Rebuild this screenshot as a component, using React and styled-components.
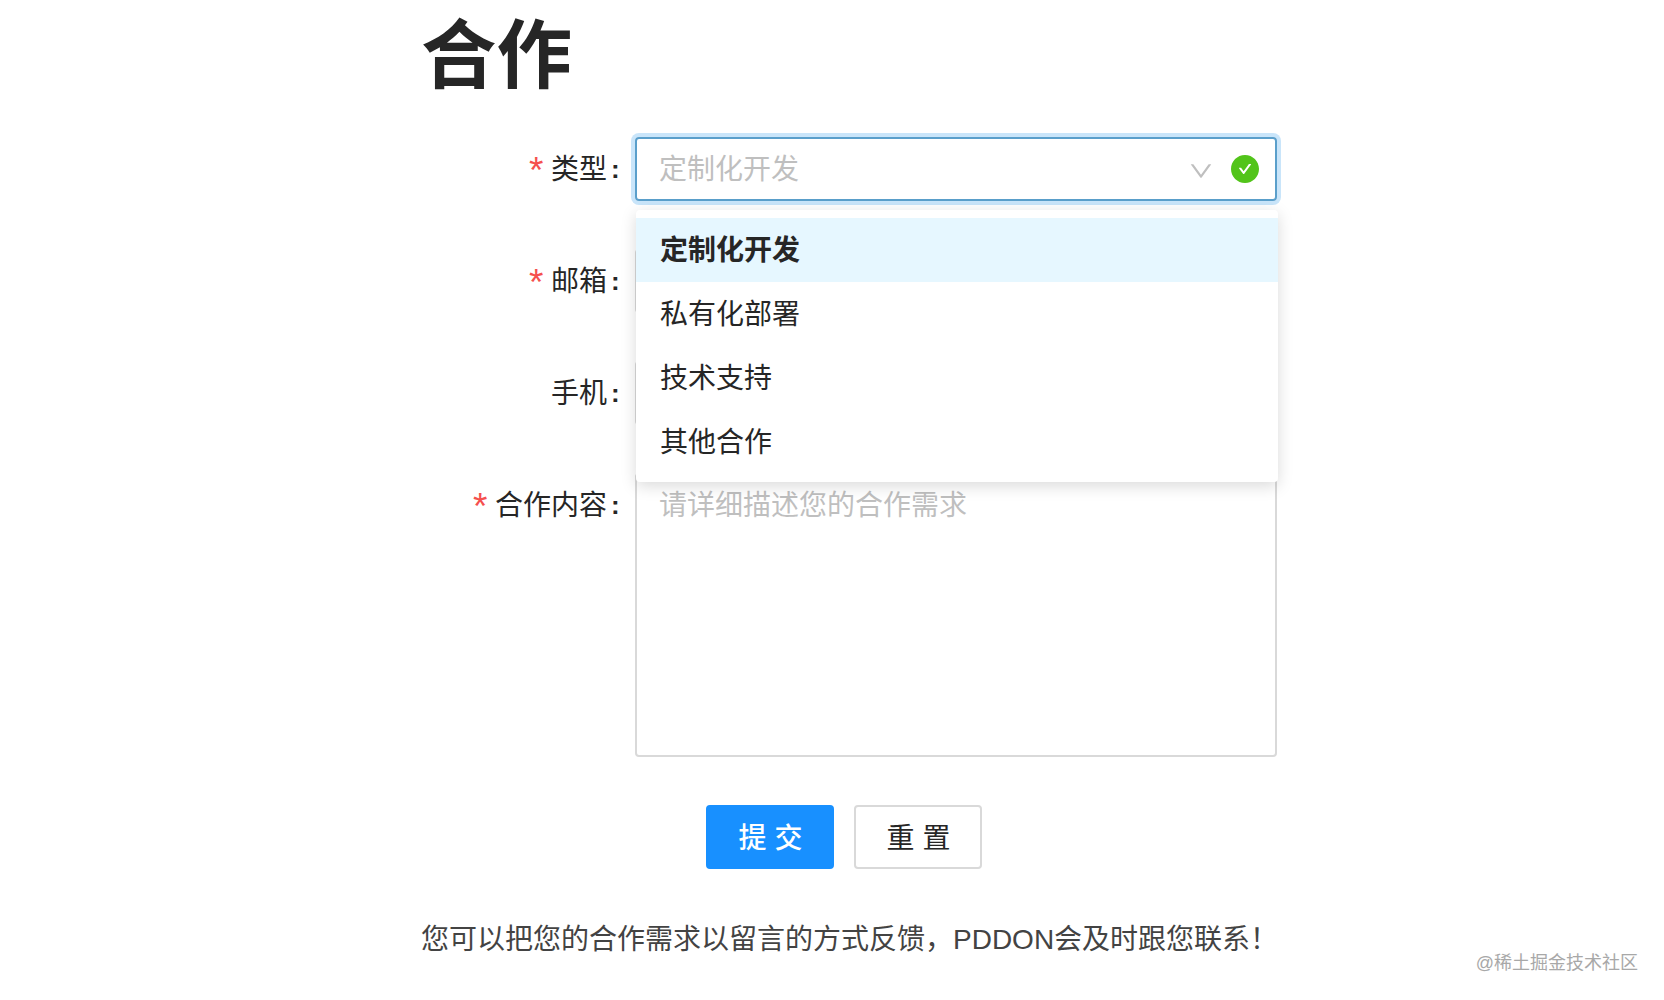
import styled, { createGlobalStyle } from 'styled-components';

const options = ['定制化开发', '私有化部署', '技术支持', '其他合作'];
const selected = options[0];

const ArrowIcon = () => (
  <svg width="24" height="24" viewBox="64 64 896 896" fill="#bfbfbf">
    <path d="M884 256h-75c-5.1 0-9.9 2.5-12.9 6.6L512 654.2 227.9 262.6c-3-4.1-7.8-6.6-12.9-6.6h-75c-6.5 0-10.3 7.4-6.5 12.7l352.6 486.1c12.8 17.6 39 17.6 51.7 0l352.6-486.1c3.9-5.3.1-12.7-6.4-12.7z" />
  </svg>
);

const SuccessIcon = () => (
  <svg width="28" height="28" viewBox="64 64 896 896" fill="#52c41a">
    <path d="M512 64C264.6 64 64 264.6 64 512s200.6 448 448 448 448-200.6 448-448S759.4 64 512 64zm193.5 301.7l-210.6 292a31.8 31.8 0 0 1-51.7 0L318.5 484.9c-3.8-5.3 0-12.7 6.5-12.7h46.9c10.2 0 19.9 4.9 25.9 13.3l71.2 98.8 157.2-218c6-8.3 15.6-13.3 25.9-13.3H699c6.5 0 10.3 7.4 6.5 12.7z" />
  </svg>
);

const Field = ({ label, required, children }) => (
  <FormItem>
    <Label>
      {required && <Required>*</Required>}
      {label}
      <Colon>:</Colon>
    </Label>
    <Control>{children}</Control>
  </FormItem>
);

const App = () => {
  return (
    <Page>
      <GlobalStyle />
      <Container>
        <Title>合作</Title>
        <Form>
          <Field label="类型" required>
            <Select>
              <Placeholder>{selected}</Placeholder>
              <Icons>
                <ArrowIcon />
                <SuccessIcon />
              </Icons>
            </Select>
            <Dropdown>
              {options.map((option) => (
                <Option key={option} $active={option === selected}>
                  {option}
                </Option>
              ))}
            </Dropdown>
          </Field>
          <Field label="邮箱" required>
            <InputBox />
          </Field>
          <Field label="手机">
            <InputBox />
          </Field>
          <Field label="合作内容" required>
            <TextArea>
              <Placeholder>请详细描述您的合作需求</Placeholder>
            </TextArea>
          </Field>
        </Form>
        <Buttons>
          <Button $primary>提 交</Button>
          <Button>重 置</Button>
        </Buttons>
        <Tip>您可以把您的合作需求以留言的方式反馈，PDDON会及时跟您联系！</Tip>
      </Container>
      <Watermark>@稀土掘金技术社区</Watermark>
    </Page>
  );
};

export default App;

const GlobalStyle = createGlobalStyle`
  * {
    box-sizing: border-box;
  }

  body {
    margin: 0;
    background-color: #fff;
    color: #262626;
    font-family: 'Liberation Sans', 'Noto Sans CJK SC', sans-serif;
    font-size: 28px;
  }
`;

const Page = styled.div`
  position: relative;
  height: 1000px;
  overflow: hidden;
`;

const Container = styled.div`
  display: flex;
  flex-direction: column;
  width: 856px;
  margin-left: 421px;
`;

const Title = styled.h1`
  height: 137px;
  margin: 0;
  font-size: 75.5px;
  font-weight: 700;
  line-height: 112px;
`;

const Form = styled.div`
  display: flex;
  flex-direction: column;
  gap: 48px;
`;

const FormItem = styled.div`
  display: flex;
`;

const Label = styled.div`
  display: flex;
  justify-content: flex-end;
  width: 214px;
  height: 64px;
  line-height: 66px;
  white-space: nowrap;
`;

const Required = styled.span`
  width: 14px;
  margin-right: 8px;
  color: #f5504e;
  font-size: 37px;
  line-height: 67px;
  text-align: center;
`;

const Colon = styled.span`
  width: 28px;
  padding-left: 4px;
  font-size: 26px;
  font-weight: 700;
  line-height: 64px;
`;

const Control = styled.div`
  position: relative;
  width: 642px;
`;

const InputBox = styled.div`
  height: 64px;
  border: 2px solid #d9d9d9;
  border-radius: 4px;
`;

const Select = styled(InputBox)`
  display: flex;
  align-items: center;
  justify-content: space-between;
  padding: 0 16px 0 22px;
  border-color: #5a9fcb;
  box-shadow: 0 0 0 4px #c9e5fa;
`;

const TextArea = styled(InputBox)`
  height: 284px;
  padding: 0 22px;
`;

const Placeholder = styled.div`
  height: 60px;
  color: #bfbfbf;
  line-height: 62px;
`;

const Icons = styled.div`
  display: flex;
  align-items: center;
  gap: 18px;

  svg:first-child {
    margin-top: 4px;
  }
`;

const Dropdown = styled.div`
  position: absolute;
  z-index: 1;
  top: 73px;
  left: 1px;
  width: 642px;
  padding: 8px 0;
  border-radius: 4px;
  background-color: #fff;
  box-shadow: 0 4px 16px rgba(0, 0, 0, 0.15);
`;

const Option = styled.div`
  height: 64px;
  padding: 0 24px;
  background-color: ${({ $active }) => ($active ? '#e6f7ff' : '#fff')};
  font-weight: ${({ $active }) => ($active ? 700 : 400)};
  line-height: 66px;
`;

const Buttons = styled.div`
  display: flex;
  gap: 20px;
  margin: 48px 0 0 285px;
`;

const Button = styled.button`
  width: 128px;
  height: 64px;
  padding: 0 0 3px 1px;
  border: 2px solid ${({ $primary }) => ($primary ? '#1890ff' : '#d9d9d9')};
  border-radius: 4px;
  background-color: ${({ $primary }) => ($primary ? '#1890ff' : '#fff')};
  color: ${({ $primary }) => ($primary ? '#fff' : '#262626')};
  font: inherit;
  font-weight: ${({ $primary }) => ($primary ? 500 : 400)};
`;

const Tip = styled.p`
  margin: 48px 0 0;
  color: #434343;
  line-height: 45px;
  white-space: nowrap;
`;

const Watermark = styled.div`
  position: absolute;
  right: 26px;
  bottom: 23px;
  color: #a8a8a8;
  font-size: 18px;
  line-height: 28px;
`;
